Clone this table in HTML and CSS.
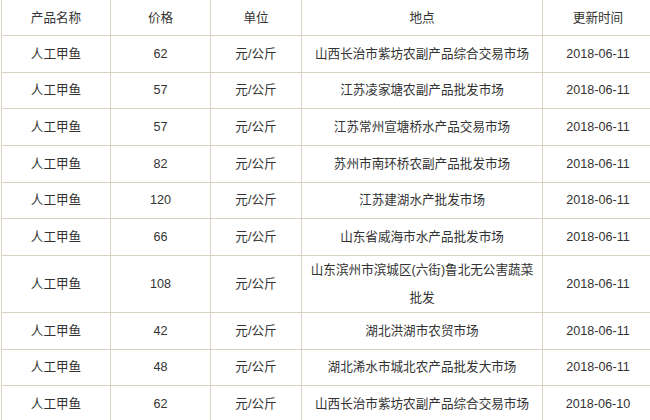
FILE: index.html
```html
<!DOCTYPE html>
<html lang="zh-CN">
<head>
<meta charset="utf-8">
<title>人工甲鱼价格</title>
<link rel="stylesheet" href="styles.css">
</head>
<body>
<table class="price-table">
  <colgroup>
    <col class="c-name">
    <col class="c-price">
    <col class="c-unit">
    <col class="c-place">
    <col class="c-date">
  </colgroup>
  <thead>
    <tr><th>产品名称</th><th>价格</th><th>单位</th><th>地点</th><th>更新时间</th></tr>
  </thead>
  <tbody>
    <tr><td>人工甲鱼</td><td>62</td><td>元/公斤</td><td>山西长治市紫坊农副产品综合交易市场</td><td>2018-06-11</td></tr>
    <tr><td>人工甲鱼</td><td>57</td><td>元/公斤</td><td>江苏凌家塘农副产品批发市场</td><td>2018-06-11</td></tr>
    <tr><td>人工甲鱼</td><td>57</td><td>元/公斤</td><td>江苏常州宣塘桥水产品交易市场</td><td>2018-06-11</td></tr>
    <tr><td>人工甲鱼</td><td>82</td><td>元/公斤</td><td>苏州市南环桥农副产品批发市场</td><td>2018-06-11</td></tr>
    <tr><td>人工甲鱼</td><td>120</td><td>元/公斤</td><td>江苏建湖水产批发市场</td><td>2018-06-11</td></tr>
    <tr><td>人工甲鱼</td><td>66</td><td>元/公斤</td><td>山东省威海市水产品批发市场</td><td>2018-06-11</td></tr>
    <tr><td>人工甲鱼</td><td>108</td><td>元/公斤</td><td>山东滨州市滨城区(六街)鲁北无公害蔬菜批发</td><td>2018-06-11</td></tr>
    <tr><td>人工甲鱼</td><td>42</td><td>元/公斤</td><td>湖北洪湖市农贸市场</td><td>2018-06-11</td></tr>
    <tr><td>人工甲鱼</td><td>48</td><td>元/公斤</td><td>湖北浠水市城北农产品批发大市场</td><td>2018-06-11</td></tr>
    <tr><td>人工甲鱼</td><td>62</td><td>元/公斤</td><td>山西长治市紫坊农副产品综合交易市场</td><td>2018-06-10</td></tr>
  </tbody>
</table>
</body>
</html>
```
FILE: styles.css
```css
html, body {
  margin: 0;
  padding: 0;
  background: #ffffff;
}

body {
  font-family: "Liberation Sans", "Noto Sans CJK SC", sans-serif;
  font-size: 12.6px;
  color: #333333;
}

.price-table {
  border-collapse: collapse;
  table-layout: fixed;
  width: 652px;
  margin-left: 1px;
}

.c-name { width: 109px; }
.c-price { width: 100px; }
.c-unit { width: 91px; }
.c-place { width: 241px; }
.c-date { width: 111px; }

.price-table th,
.price-table td {
  border: 1px solid #d8d1c2;
  padding: 0 4px;
  text-align: center;
  vertical-align: middle;
  font-weight: normal;
  line-height: 28px;
}

.price-table th {
  border-top: none;
  height: 35px;
}

.price-table td {
  height: 35.67px;
}
```
